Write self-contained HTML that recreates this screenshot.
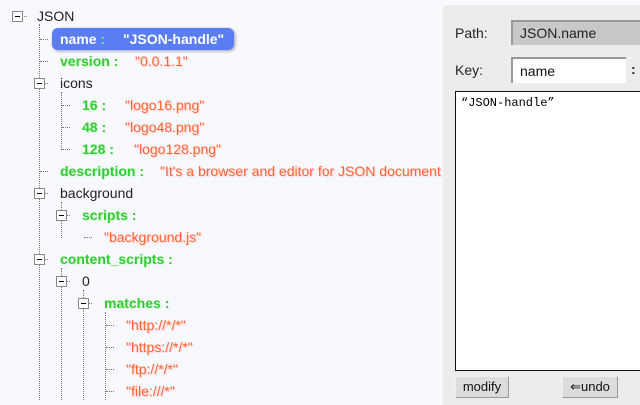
<!DOCTYPE html>
<html><head><style>
*{margin:0;padding:0;box-sizing:border-box}
body{width:640px;height:400px;overflow:hidden;background:#f8f8ff;font-family:"Liberation Sans","DejaVu Sans",sans-serif;font-size:14px;position:relative}
.t{position:absolute;white-space:nowrap;line-height:16px;color:#222}
.k{color:#3c3;font-weight:bold;text-shadow:1px 1px 1px #cfc}
.v{color:#f63;text-shadow:1px 1px 1px #fcc}
.vl{position:absolute;border-left:1px dotted #777;width:0}
.hl{position:absolute;border-top:1px dotted #777;height:0}
.b{position:absolute;width:11px;height:11px;border:1px solid #888;background:#fff}
.b:after{content:"";position:absolute;left:2px;top:4px;width:5px;height:1px;background:#000}
#left{position:absolute;left:0;top:0;width:442px;height:400px;overflow:hidden}
#panel{position:absolute;left:443px;top:5px;width:200px;height:400px;background:#ececec;border-radius:4px 0 0 0}
.lbl{position:absolute;font-size:14px;color:#222}
.btn{position:absolute;height:22px;background:#dcdcdc;border:1px solid #999;border-top-color:#eee;border-left-color:#eee;font-size:13px;text-align:center;line-height:20px;color:#111}
</style></head><body>
<div id="left">
<div class="vl" style="left:39px;top:24px;height:376px"></div>
<div class="vl" style="left:61px;top:92px;height:58px"></div>
<div class="vl" style="left:61px;top:202px;height:36px"></div>
<div class="vl" style="left:61px;top:268px;height:132px"></div>
<div class="vl" style="left:83px;top:290px;height:110px"></div>
<div class="vl" style="left:105px;top:312px;height:88px"></div>
<div class="hl" style="left:22px;top:16px;width:5px"></div>
<div class="hl" style="left:40px;top:39px;width:8px"></div>
<div class="hl" style="left:40px;top:61px;width:8px"></div>
<div class="hl" style="left:44px;top:83px;width:4px"></div>
<div class="hl" style="left:62px;top:105px;width:8px"></div>
<div class="hl" style="left:62px;top:127px;width:8px"></div>
<div class="hl" style="left:62px;top:149px;width:8px"></div>
<div class="hl" style="left:40px;top:171px;width:8px"></div>
<div class="hl" style="left:44px;top:193px;width:4px"></div>
<div class="hl" style="left:66px;top:215px;width:4px"></div>
<div class="hl" style="left:84px;top:237px;width:8px"></div>
<div class="hl" style="left:44px;top:259px;width:4px"></div>
<div class="hl" style="left:66px;top:281px;width:4px"></div>
<div class="hl" style="left:88px;top:303px;width:4px"></div>
<div class="hl" style="left:106px;top:325px;width:8px"></div>
<div class="hl" style="left:106px;top:347px;width:8px"></div>
<div class="hl" style="left:106px;top:369px;width:8px"></div>
<div class="hl" style="left:106px;top:391px;width:8px"></div>
<div class="b" style="left:12px;top:11px"></div>
<div class="b" style="left:34px;top:78px"></div>
<div class="b" style="left:34px;top:188px"></div>
<div class="b" style="left:56px;top:210px"></div>
<div class="b" style="left:34px;top:254px"></div>
<div class="b" style="left:56px;top:276px"></div>
<div class="b" style="left:78px;top:298px"></div>
<div class="t" style="left:37px;top:8px">JSON</div>
<div style="position:absolute;left:52px;top:28px;width:182px;height:22px;background:#5a7ef2;border-radius:6px;box-shadow:1px 1px 3px #99a"></div>
<div class="t" style="left:60px;top:31px;color:#fff;font-weight:bold">name <span style="color:#6e6">:</span></div>
<div class="t" style="left:123px;top:31px;color:#fff;font-weight:bold">"JSON-handle"</div>
<div class="t k" style="left:60px;top:53px">version :</div><div class="t v" style="left:135px;top:53px">"0.0.1.1"</div>
<div class="t" style="left:60px;top:75px">icons</div>
<div class="t k" style="left:82px;top:97px">16 :</div><div class="t v" style="left:125px;top:97px">"logo16.png"</div>
<div class="t k" style="left:82px;top:119px">48 :</div><div class="t v" style="left:125px;top:119px">"logo48.png"</div>
<div class="t k" style="left:82px;top:141px">128 :</div><div class="t v" style="left:134px;top:141px">"logo128.png"</div>
<div class="t k" style="left:60px;top:163px">description :</div><div class="t v" style="left:160px;top:163px">"It's a browser and editor for JSON document."</div>
<div class="t" style="left:60px;top:185px">background</div>
<div class="t k" style="left:82px;top:207px">scripts :</div>
<div class="t v" style="left:104px;top:229px">"background.js"</div>
<div class="t k" style="left:60px;top:251px">content_scripts :</div>
<div class="t" style="left:82px;top:273px">0</div>
<div class="t k" style="left:104px;top:295px">matches :</div>
<div class="t v" style="left:126px;top:317px">"http://*/*"</div>
<div class="t v" style="left:126px;top:339px">"https://*/*"</div>
<div class="t v" style="left:126px;top:361px">"ftp://*/*"</div>
<div class="t v" style="left:126px;top:383px">"file:///*"</div>
</div>
<div id="panel"></div>
<div class="lbl" style="left:455px;top:25px">Path:</div>
<div style="position:absolute;left:511px;top:20px;width:130px;height:25px;background:#c8c8c8;border-top:2px solid #999;border-left:2px solid #999;font-size:14px;line-height:22px;padding-left:7px;color:#222">JSON.name</div>
<div class="lbl" style="left:455px;top:62px">Key:</div>
<div style="position:absolute;left:511px;top:57px;width:115px;height:26px;background:#fff;border-top:2px solid #999;border-left:2px solid #999;font-size:14px;line-height:24px;padding-left:7px;color:#111">name</div>
<div class="lbl" style="left:631px;top:61px;font-weight:bold">:</div>
<div style="position:absolute;left:455px;top:91px;width:190px;height:280px;background:#fff;border:1px solid #111;font-family:'Liberation Mono',monospace;font-size:12px;padding:4px 5px">“JSON-handle”</div>
<div class="btn" style="left:455px;top:376px;width:54px">modify</div>
<div class="btn" style="left:562px;top:376px;width:56px">⇐undo</div>
</body></html>
